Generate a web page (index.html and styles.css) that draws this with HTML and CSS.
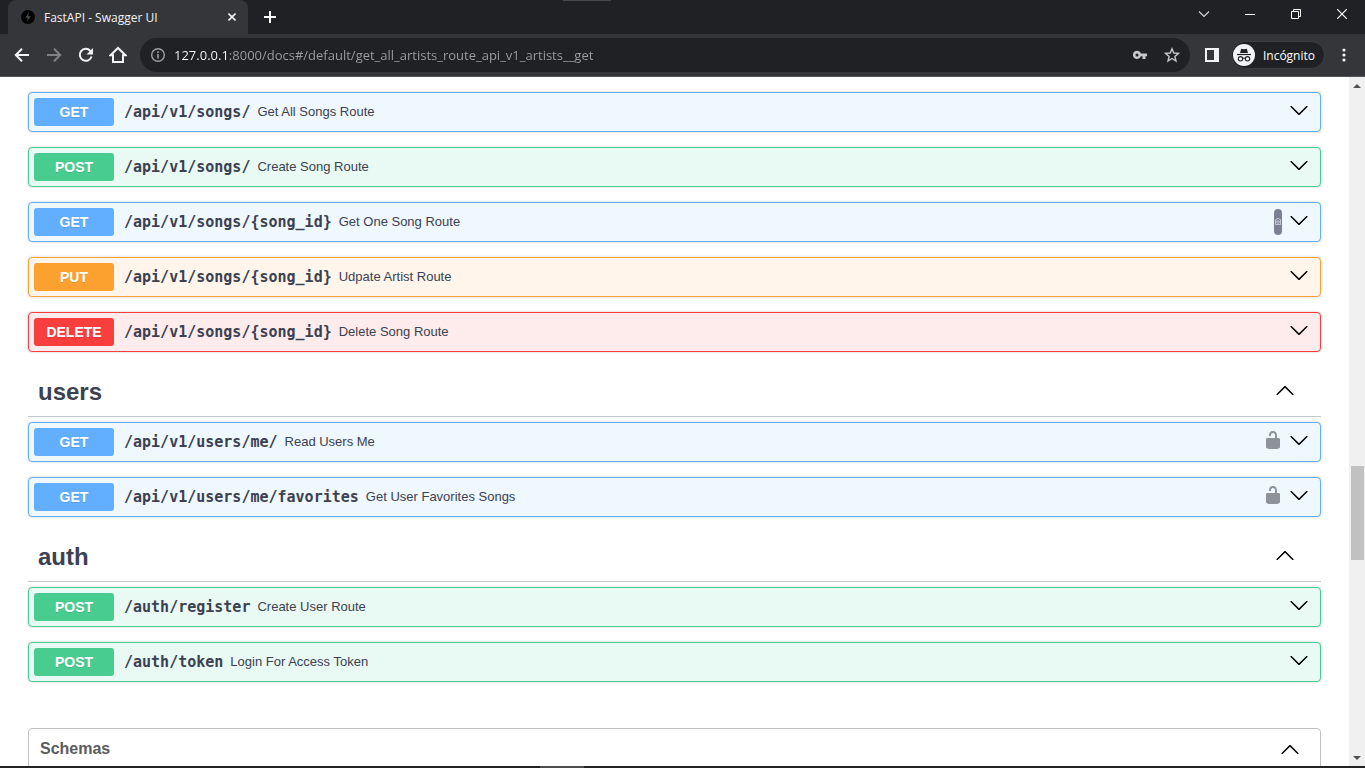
FILE: index.html
```html
<!DOCTYPE html>
<html lang="es">
<head>
<meta charset="utf-8">
<title>FastAPI - Swagger UI</title>
<link rel="stylesheet" href="styles.css">
</head>
<body>
<svg class="sprite" aria-hidden="true">
  <symbol id="arrow" viewBox="0 0 20 20"><path d="M17.418 6.109c.272-.268.709-.268.979 0s.271.701 0 .969l-7.908 7.83c-.27.268-.707.268-.979 0l-7.908-7.83c-.27-.268-.27-.701 0-.969.271-.268.709-.268.979 0L10 13.25l7.418-7.141z"/></symbol>
  <symbol id="arrow-up" viewBox="0 0 20 20"><path d="M17.418 14.908c.272.27.709.27.979 0s.271-.701 0-.969l-7.908-7.83c-.27-.268-.707-.268-.979 0l-7.908 7.83c-.27.268-.27.701 0 .969.271.268.709.268.979 0L10 7.767l7.418 7.141z"/></symbol>
  <symbol id="unlocked" viewBox="0 0 20 20"><path d="M15.8 8H14V5.6C14 2.703 12.665 1 10 1 7.334 1 6 2.703 6 5.6V6h2v-.801C8 3.754 8.797 3 10 3c1.203 0 2 .754 2 2.199V8H4c-.553 0-1 .646-1 1.199V17c0 .549.428 1.139.951 1.307l1.197.387C5.672 18.861 6.55 19 7.1 19h5.8c.549 0 1.428-.139 1.951-.307l1.196-.387c.524-.167.953-.757.953-1.306V9.199C17 8.646 16.352 8 15.8 8z"/></symbol>
</svg>

<header class="chrome">
  <div class="tabstrip">
    <div class="tab">
      <svg class="favicon" viewBox="0 0 14 14"><circle cx="7" cy="7" r="7" fill="#000"/><path d="M7.8 2.500 4.300 7.800h2.300L6.100 11.500 9.700 6.200H7.300z" fill="#4a4b50"/></svg>
      <span class="tab-title">FastAPI - Swagger UI</span>
      <button class="icon-btn tab-close" aria-label="Cerrar pestaña"><svg width="8" height="8" viewBox="0 0 8 8"><path d="M.5.5l7 7M7.500.5l-7 7" stroke="#f1f3f4" stroke-width="1.600"/></svg></button>
    </div>
    <button class="icon-btn new-tab" aria-label="Nueva pestaña"><svg width="12" height="12" viewBox="0 0 12 12"><path d="M6 0v12M0 6h12" stroke="#fff" stroke-width="2"/></svg></button>
    <div class="drag-area"><span class="grip"></span></div>
    <div class="window-controls">
      <button class="icon-btn" aria-label="Buscar pestañas"><svg width="12" height="12" viewBox="0 0 12 12"><path d="M1 3.500l5 5 5-5" fill="none" stroke="#d5d6d8" stroke-width="1.200"/></svg></button>
      <button class="icon-btn" aria-label="Minimizar"><svg width="10" height="10" viewBox="0 0 10 10"><path d="M0 5.500h10" stroke="#fff"/></svg></button>
      <button class="icon-btn" aria-label="Restaurar"><svg width="10" height="10" viewBox="0 0 10 10"><path d="M.5 2.500h7v7h-7zM2.500 2V.5h7v7H8" fill="none" stroke="#fff"/></svg></button>
      <button class="icon-btn" aria-label="Cerrar"><svg width="10" height="10" viewBox="0 0 10 10"><path d="M0 0l10 10M10 0L0 10" stroke="#fff" stroke-width="1.200"/></svg></button>
    </div>
  </div>
  <div class="toolbar">
    <button class="icon-btn nav" aria-label="Atrás"><svg width="16" height="16" viewBox="0 0 16 16"><path d="M15 8H2.500M8 1.800L1.800 8 8 14.200" fill="none" stroke="#f1f3f4" stroke-width="2"/></svg></button>
    <button class="icon-btn nav" aria-label="Adelante"><svg width="16" height="16" viewBox="0 0 16 16"><path d="M1 8h12.500M8 1.800L14.200 8 8 14.200" fill="none" stroke="#7f8184" stroke-width="2"/></svg></button>
    <button class="icon-btn nav" aria-label="Recargar"><svg width="16" height="16" viewBox="0 0 16 16"><path d="M13.600 9.500A6 6 0 1 1 12.300 3.800L14 5.500" fill="none" stroke="#f1f3f4" stroke-width="2"/><path d="M15 1v6.500H8.500z" fill="#f1f3f4"/></svg></button>
    <button class="icon-btn nav" aria-label="Inicio"><svg width="18" height="18" viewBox="0 0 18 18"><path d="M1.500 9.200L9 2l7.500 7.200H14V16H4V9.200z" fill="none" stroke="#f1f3f4" stroke-width="2"/></svg></button>
    <div class="omnibox">
      <svg width="16" height="16" viewBox="0 0 16 16"><circle cx="8" cy="8" r="6.300" fill="none" stroke="#9aa0a6" stroke-width="1.400"/><path d="M8 7v4.500M8 4.200v1.700" stroke="#9aa0a6" stroke-width="1.600"/></svg>
      <input class="url" type="text" aria-label="Dirección" value="127.0.0.1:8000/docs#/default/get_all_artists_route_api_v1_artists__get">
      <button class="icon-btn nav" aria-label="Contraseñas"><svg width="14" height="10" viewBox="0 0 14 10"><path d="M4 .8a4.100 4.100 0 1 0 3.900 5.500H9.500V9H12.500V6.300H14V3.600H7.900A4.100 4.100 0 0 0 4 .8zM4 3.400a1.500 1.500 0 1 1 0 3 1.500 1.500 0 0 1 0-3z" fill="#c4c6c8" fill-rule="evenodd"/></svg></button>
      <button class="icon-btn nav" aria-label="Favorito"><svg width="16" height="16" viewBox="0 0 16 16"><path d="M8 1.800l1.800 4.200 4.700.4-3.600 3 1.100 4.600-4-2.500L4 14l1.100-4.600-3.600-3L6.200 6z" fill="none" stroke="#c4c6c8" stroke-width="1.400"/></svg></button>
    </div>
    <button class="icon-btn panel" aria-label="Panel lateral"><svg width="14" height="14" viewBox="0 0 14 14"><path d="M0 0h14v14H0zM2 2v10h7V2z" fill="#f1f3f4" fill-rule="evenodd"/></svg></button>
    <button class="incognito"><svg width="22" height="22" viewBox="0 0 22 22"><circle cx="11" cy="11" r="11" fill="#f1f3f4"/><path d="M7 9l1.200-4.300 2.800.5 2.800-.5L15 9z" fill="#202124"/><path d="M4 10.500h14" stroke="#202124" stroke-width="1.200"/><circle cx="7.500" cy="14.800" r="2.200" fill="none" stroke="#202124" stroke-width="1.100"/><circle cx="14.500" cy="14.800" r="2.200" fill="none" stroke="#202124" stroke-width="1.100"/><path d="M9.500 14.500q1.500-.8 3 0" fill="none" stroke="#202124"/></svg>Incógnito</button>
    <button class="icon-btn menu" aria-label="Menú"><svg width="4" height="14" viewBox="0 0 4 14"><circle cx="2" cy="2" r="1.600" fill="#f1f3f4"/><circle cx="2" cy="7" r="1.600" fill="#f1f3f4"/><circle cx="2" cy="12" r="1.600" fill="#f1f3f4"/></svg></button>
  </div>
</header>

<div class="viewport">
  <main class="swagger">
    <section class="group">
      <button class="op get"><span class="method">GET</span><span class="path">/api/v1/songs/</span><span class="summary">Get All Songs Route</span><svg class="icon"><use href="#arrow"/></svg></button>
      <button class="op post"><span class="method">POST</span><span class="path">/api/v1/songs/</span><span class="summary">Create Song Route</span><svg class="icon"><use href="#arrow"/></svg></button>
      <button class="op get"><span class="method">GET</span><span class="path">/api/v1/songs/{song_id}</span><span class="summary">Get One Song Route</span><svg class="capture" viewBox="0 0 8 26"><rect width="8" height="26" rx="4" fill="#7b8192"/><path d="M1.500 10.500h1l.7-1h1.600l.7 1h1v5h-5z" fill="none" stroke="#d5d8de" stroke-width=".8"/><circle cx="4" cy="13" r="1.300" fill="none" stroke="#d5d8de" stroke-width=".8"/></svg><svg class="icon"><use href="#arrow"/></svg></button>
      <button class="op put"><span class="method">PUT</span><span class="path">/api/v1/songs/{song_id}</span><span class="summary">Udpate Artist Route</span><svg class="icon"><use href="#arrow"/></svg></button>
      <button class="op delete"><span class="method">DELETE</span><span class="path">/api/v1/songs/{song_id}</span><span class="summary">Delete Song Route</span><svg class="icon"><use href="#arrow"/></svg></button>
    </section>
    <section class="group">
      <h3 class="tag"><button class="tag-btn">users<svg class="icon"><use href="#arrow-up"/></svg></button></h3>
      <button class="op get"><span class="method">GET</span><span class="path">/api/v1/users/me/</span><span class="summary">Read Users Me</span><svg class="icon lock"><use href="#unlocked"/></svg><svg class="icon"><use href="#arrow"/></svg></button>
      <button class="op get"><span class="method">GET</span><span class="path">/api/v1/users/me/favorites</span><span class="summary">Get User Favorites Songs</span><svg class="icon lock"><use href="#unlocked"/></svg><svg class="icon"><use href="#arrow"/></svg></button>
    </section>
    <section class="group">
      <h3 class="tag"><button class="tag-btn">auth<svg class="icon"><use href="#arrow-up"/></svg></button></h3>
      <button class="op post"><span class="method">POST</span><span class="path">/auth/register</span><span class="summary">Create User Route</span><svg class="icon"><use href="#arrow"/></svg></button>
      <button class="op post"><span class="method">POST</span><span class="path">/auth/token</span><span class="summary">Login For Access Token</span><svg class="icon"><use href="#arrow"/></svg></button>
    </section>
    <section class="schemas">
      <button class="schemas-btn">Schemas<svg class="icon"><use href="#arrow-up"/></svg></button>
    </section>
  </main>
  <div class="scrollbar" aria-hidden="true">
    <svg class="scroll-arrow" viewBox="0 0 8 4"><path d="M0 4l4-4 4 4z"/></svg>
    <div class="track"><span class="thumb"></span></div>
    <svg class="scroll-arrow" viewBox="0 0 8 4"><path d="M0 0l4 4 4-4z"/></svg>
  </div>
</div>
<footer class="taskbar"><span class="task"></span></footer>
</body>
</html>
```

FILE: styles.css
```css
* { box-sizing: border-box; }

body {
  margin: 0;
  height: 100vh;
  display: flex;
  flex-direction: column;
  overflow: hidden;
  background: #fff;
  color: #3b4151;
  font-family: "Liberation Sans", Arial, sans-serif;
}

button {
  margin: 0;
  padding: 0;
  border: 0;
  background: none;
  color: inherit;
  font: inherit;
  cursor: pointer;
}

svg { display: block; flex: none; }
.sprite { display: none; }

/* Browser window */
.chrome { flex: none; font-family: "Open Sans", "Noto Sans", sans-serif; }

.icon-btn {
  flex: none;
  display: flex;
  align-items: center;
  justify-content: center;
}

.tabstrip {
  display: flex;
  height: 34px;
  padding-left: 8px;
  background: #202124;
}

.tab {
  display: flex;
  align-items: center;
  width: 240px;
  padding: 0 12px 0 13px;
  border-radius: 8px 8px 0 0;
  background: #35363a;
  color: #f1f3f4;
  font-size: 12px;
}

.favicon { width: 14px; height: 14px; margin-right: 9px; }
.tab-title { flex: 1; white-space: nowrap; }
.new-tab { width: 44px; }
.tab-close { width: 8px; height: 16px; }
.drag-area { flex: 1; display: flex; padding-left: 271px; }
.grip { width: 48px; height: 1px; background: #4a4a4c; }
.window-controls { display: flex; padding-bottom: 6px; }
.window-controls .icon-btn { width: 46px; }

.toolbar {
  display: flex;
  align-items: center;
  height: 43px;
  padding: 0 2px 0 6px;
  background: #35363a;
  border-bottom: 1px solid #55565a;
}

.nav { width: 32px; height: 32px; }

.omnibox {
  flex: 1;
  display: flex;
  align-items: center;
  height: 34px;
  margin-left: 6px;
  padding: 0 2px 0 10px;
  border-radius: 17px;
  background: #202124;
}

.url {
  flex: 1;
  min-width: 0;
  height: 24px;
  margin-left: 8px;
  padding: 0;
  border: 0;
  outline: 0;
  font-family: inherit;
  font-size: 13px;
  color: transparent;
  background: linear-gradient(90deg, #fff 54px, #9aa0a6 54px);
  -webkit-background-clip: text;
  background-clip: text;
}

.panel { width: 14px; margin: 0 12px 0 15px; }

.incognito {
  display: flex;
  align-items: center;
  gap: 8px;
  height: 28px;
  padding: 0 9px 0 1px;
  border: 1px solid #3c3d41;
  border-radius: 14px;
  background: #202124;
  color: #fff;
  font-size: 12px;
}

.menu { width: 38px; height: 32px; }

/* Page */
.viewport { flex: 1; min-height: 0; display: flex; }

.swagger {
  flex: 1;
  min-width: 0;
  overflow: hidden;
  padding: 15px 28px 0;
}

.group { display: flex; flex-direction: column; gap: 15px; margin-bottom: 15px; }

.op {
  display: flex;
  align-items: center;
  width: 100%;
  padding: 5px 11px 5px 5px;
  border: 1px solid;
  border-radius: 4px;
  box-shadow: 0 0 3px rgba(0, 0, 0, .19);
  text-align: left;
}

.get { border-color: #61affe; background: #eff7ff; }
.post { border-color: #49cc90; background: #e9f9f3; }
.put { border-color: #fca130; background: #fff5ea; }
.delete { border-color: #f93e3e; background: #feebeb; }
.get .method { background: #61affe; }
.post .method { background: #49cc90; }
.put .method { background: #fca130; }
.delete .method { background: #f93e3e; }

.method {
  width: 80px;
  border-radius: 3px;
  color: #fff;
  font-size: 14px;
  font-weight: 700;
  line-height: 28px;
  text-align: center;
  text-shadow: 0 1px 0 rgba(0, 0, 0, .1);
}

.path {
  padding: 0 7px 0 10px;
  font-family: "DejaVu Sans Mono", monospace;
  font-size: 15px;
  font-weight: 700;
}

.summary { flex: 1; padding-bottom: 2px; font-size: 13px; }

.icon { width: 20px; height: 20px; margin-bottom: 4px; fill: #000; }
.op .lock { margin-right: 6px; opacity: .4; }
.capture { width: 8px; height: 26px; margin-right: 7px; }

.tag {
  margin: 0 0 -10px;
  border-bottom: 1px solid #c4c6c9;
  font-size: 24px;
}

.tag-btn {
  display: flex;
  align-items: center;
  justify-content: space-between;
  width: 100%;
  height: 49px;
  padding: 0 26px 0 10px;
}

.schemas {
  margin-top: 46px;
  border: 1px solid #c0c0c0;
  border-radius: 4px;
  height: 60px;
}

.schemas-btn {
  display: flex;
  align-items: center;
  justify-content: space-between;
  width: 100%;
  height: 40px;
  padding: 0 20px 0 11px;
  color: #5c5c5c;
  font-size: 16px;
  font-weight: 700;
}

.schemas-btn .icon { margin-bottom: 0; }

.scrollbar {
  flex: none;
  display: flex;
  flex-direction: column;
  align-items: center;
  width: 16px;
  padding: 7px 0 6px;
  background: #f0f0f0;
}

.scroll-arrow { width: 8px; height: 4px; fill: #505050; }

.track {
  flex: 1;
  display: grid;
  grid-template-rows: 378fr 94fr 196fr;
  width: 13px;
}

.thumb { grid-row: 2; background: #c1c1c1; }

.taskbar { flex: none; display: flex; height: 2px; padding-left: 540px; background: #232325; }
.task { width: 44px; background: #4d4d4f; }
```
